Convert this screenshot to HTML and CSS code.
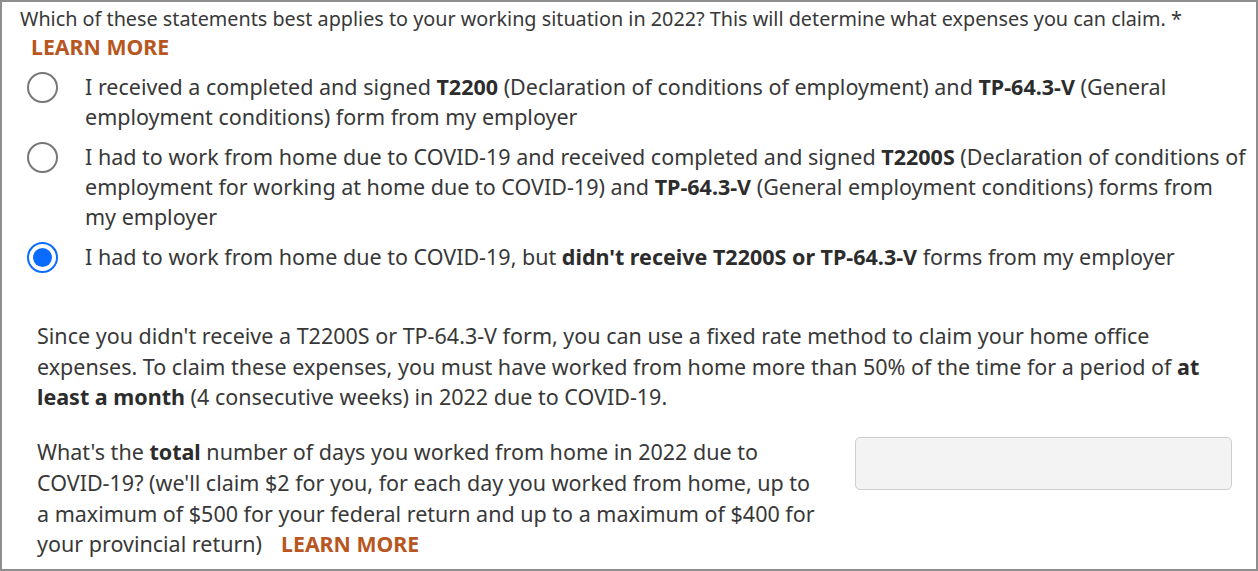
FILE: index.html
```html
<!DOCTYPE html>
<html lang="en">
<head>
<meta charset="utf-8">
<title>Home office expenses</title>
<link rel="stylesheet" href="styles.css">
</head>
<body>
<div class="frame">
  <div class="title">Which of these statements best applies to your working situation in 2022? This will determine what expenses you can claim. *</div>
  <div class="learn-top"><a class="learn" href="#">LEARN MORE</a></div>
  <div class="options">
    <label class="option">
      <span class="radio"></span>
      <span class="opt-text">I received a completed and signed <b>T2200</b> (Declaration of conditions of employment) and <b>TP-64.3-V</b> (General employment conditions) form from my employer</span>
    </label>
    <label class="option">
      <span class="radio"></span>
      <span class="opt-text">I had to work from home due to COVID-19 and received completed and signed <b>T2200S</b> (Declaration of conditions of employment for working at home due to COVID-19) and <b>TP-64.3-V</b> (General employment conditions) forms from my employer</span>
    </label>
    <label class="option">
      <span class="radio checked"></span>
      <span class="opt-text">I had to work from home due to COVID-19, but <b>didn't receive T2200S or TP-64.3-V</b> forms from my employer</span>
    </label>
  </div>
  <div class="detail">
    <p class="info">Since you didn't receive a T2200S or TP-64.3-V form, you can use a fixed rate method to claim your home office expenses. To claim these expenses, you must have worked from home more than 50% of the time for a period of <b>at least a month</b> (4 consecutive weeks) in 2022 due to COVID-19.</p>
    <div class="question">
      <p class="q-text">What's the <b>total</b> number of days you worked from home in 2022 due to COVID-19? (we'll claim $2 for you, for each day you worked from home, up to a maximum of $500 for your federal return and up to a maximum of $400 for your provincial return)<a class="learn inline" href="#">LEARN MORE</a></p>
      <div class="field"><input class="days" type="text" aria-label="Number of days"></div>
    </div>
  </div>
</div>
</body>
</html>
```
FILE: styles.css
```css
* { box-sizing: border-box; }
html, body {
  margin: 0;
  padding: 0;
  background: #fff;
}
body {
  font-family: "Noto Sans", "Open Sans", "Liberation Sans", sans-serif;
  color: #383838;
}
.frame {
  width: 1258px;
  height: 571px;
  border: 2px solid #8e8e8e;
  padding-top: 3px;
  overflow: hidden;
}
.title {
  font-size: 19.8px;
  line-height: 27px;
  padding-left: 18px;
  white-space: nowrap;
}
.learn-top {
  padding-left: 29px;
  line-height: 30px;
}
.learn {
  color: #b8561f;
  font-weight: 700;
  font-size: 21.3px;
  text-decoration: none;
}
.learn.inline {
  margin-left: 19px;
}
.options {
  margin-top: 8px;
  display: flex;
  flex-direction: column;
  gap: 10px;
  padding-right: 9px;
}
.option {
  display: flex;
  align-items: flex-start;
  padding-left: 25px;
  font-size: 21.5px;
  line-height: 30px;
}
.radio {
  flex: none;
  width: 31px;
  height: 31px;
  border: 2px solid #777;
  border-radius: 50%;
  position: relative;
  background: #fff;
}
.radio.checked {
  border-color: #0a6cff;
}
.radio.checked::after {
  content: "";
  position: absolute;
  left: 4px;
  top: 4px;
  width: 19px;
  height: 19px;
  border-radius: 50%;
  background: #0a6cff;
}
.opt-text {
  margin-left: 27px;
}
b {
  font-weight: 700;
  color: #2c2c2c;
}
.detail {
  padding: 0 24px 0 35px;
  font-size: 21.5px;
  line-height: 30.7px;
}
.info {
  margin: 48px 0 0 0;
}
.question {
  margin-top: 24px;
  display: grid;
  grid-template-columns: 781px 1fr;
  column-gap: 37px;
  align-items: start;
}
.q-text {
  margin: 0;
}
.days {
  display: block;
  width: 100%;
  height: 53px;
  background: #f3f3f3;
  border: 1px solid #cfcfcf;
  border-radius: 5px;
  font-family: inherit;
  font-size: 20px;
}
```
